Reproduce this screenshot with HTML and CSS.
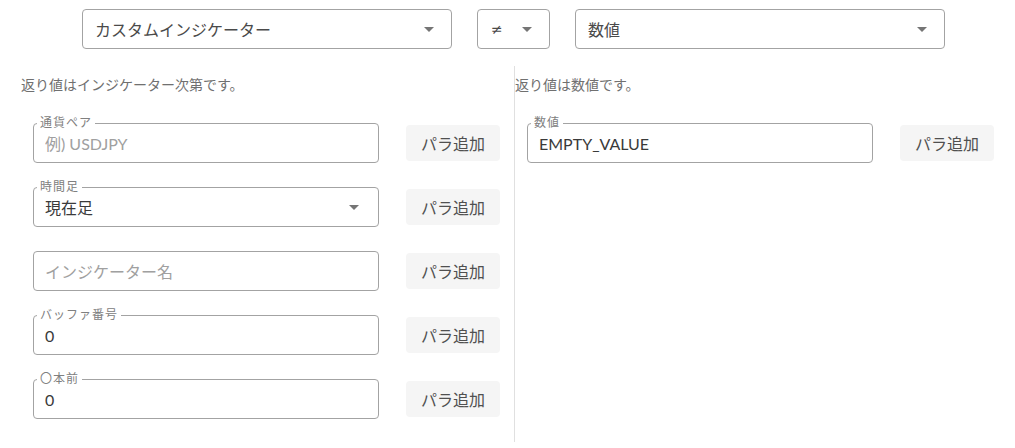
FILE: index.html
```html
<!DOCTYPE html>
<html lang="ja">
<head>
    <meta charset="UTF-8">
    <meta name="viewport" content="width=device-width, initial-scale=1.0">
    <title>条件設定</title>
    <link rel="stylesheet" href="styles.css">
</head>
<body>
    <!-- 比較条件: 左辺 / 演算子 / 右辺 -->
    <div class="condition-bar">
        <div class="select select-wide">
            <span>カスタムインジケーター</span>
            <span class="caret"></span>
        </div>
        <div class="select select-op">
            <span class="op-symbol">≠</span>
            <span class="caret"></span>
        </div>
        <div class="select select-wide">
            <span>数値</span>
            <span class="caret"></span>
        </div>
    </div>

    <div class="panels">
        <!-- 左辺のパラメータ -->
        <section class="panel panel-left">
            <p class="panel-note">返り値はインジケーター次第です。</p>

            <div class="param-row">
                <div class="field">
                    <span class="field-label">通貨ペア</span>
                    <input type="text" placeholder="例) USDJPY">
                </div>
                <button class="add-btn">パラ追加</button>
            </div>

            <div class="param-row">
                <div class="field has-caret">
                    <span class="field-label">時間足</span>
                    <input type="text" value="現在足" readonly>
                    <span class="caret"></span>
                </div>
                <button class="add-btn">パラ追加</button>
            </div>

            <div class="param-row">
                <div class="field">
                    <input type="text" placeholder="インジケーター名">
                </div>
                <button class="add-btn">パラ追加</button>
            </div>

            <div class="param-row">
                <div class="field">
                    <span class="field-label">バッファ番号</span>
                    <input type="text" value="0">
                </div>
                <button class="add-btn">パラ追加</button>
            </div>

            <div class="param-row">
                <div class="field">
                    <span class="field-label">〇本前</span>
                    <input type="text" value="0">
                </div>
                <button class="add-btn">パラ追加</button>
            </div>
        </section>

        <!-- 右辺のパラメータ -->
        <section class="panel panel-right">
            <p class="panel-note">返り値は数値です。</p>

            <div class="param-row">
                <div class="field">
                    <span class="field-label">数値</span>
                    <input type="text" value="EMPTY_VALUE">
                </div>
                <button class="add-btn">パラ追加</button>
            </div>
        </section>
    </div>
</body>
</html>
```

FILE: styles.css
```css
/* 基本スタイル */
* {
    margin: 0;
    padding: 0;
    box-sizing: border-box;
}

body {
    font-family: Lato, "Noto Sans CJK JP", sans-serif;
    background: #fff;
    color: rgba(0, 0, 0, 0.87);
}

/* 上部のセレクト群 */
.condition-bar {
    display: flex;
    justify-content: center;
    gap: 25px;
    padding-top: 9px;
    padding-left: 12px;
}

.select {
    height: 40px;
    display: flex;
    align-items: center;
    justify-content: space-between;
    padding: 0 17px 0 12px;
    border: 1px solid #a3a3a3;
    border-radius: 4px;
    font-size: 16px;
    color: #4a4a4a;
}

.select-wide {
    width: 370px;
}

.select-op {
    width: 73px;
}

.op-symbol {
    font-family: "DejaVu Sans", sans-serif;
    font-size: 14px;
    padding-left: 1px;
}

/* ドロップダウンの三角 */
.caret {
    width: 0;
    height: 0;
    border-left: 5px solid transparent;
    border-right: 5px solid transparent;
    border-top: 5px solid #757575;
    flex-shrink: 0;
}

/* 左右のパネル */
.panels {
    display: flex;
    margin-top: 17px;
}

.panel {
    padding-top: 9px;
    padding-bottom: 23px;
}

.panel-left {
    width: 515px;
    padding-left: 21px;
    border-right: 1px solid #e0e0e0;
}

.panel-right {
    flex: 1;
}

.panel-note {
    font-size: 14px;
    line-height: 20px;
    color: #707070;
    margin-bottom: 28px;
}

/* パラメータ行 */
.param-row {
    display: flex;
    align-items: center;
    gap: 27px;
    margin-left: 12px;
    margin-bottom: 24px;
}

.param-row:last-child {
    margin-bottom: 0;
}

/* アウトライン入力欄 */
.field {
    position: relative;
    width: 346px;
    height: 40px;
    display: flex;
    align-items: center;
    padding: 0 11px;
    border: 1px solid #a3a3a3;
    border-radius: 4px;
}

.field.has-caret {
    padding-right: 19px;
}

.field-label {
    position: absolute;
    top: -8px;
    left: 3px;
    padding: 0 3px;
    background: #fff;
    font-size: 12px;
    letter-spacing: 1px;
    line-height: 14px;
    color: #808080;
}

.field input {
    flex: 1;
    min-width: 0;
    border: none;
    outline: none;
    background: transparent;
    font-family: inherit;
    font-size: 16px;
    color: #3a3a3a;
}

.field input::placeholder {
    color: #a0a0a0;
}

/* パラ追加ボタン */
.add-btn {
    width: 94px;
    height: 36px;
    border: none;
    border-radius: 4px;
    background: #f5f5f5;
    font-family: inherit;
    font-size: 16px;
    color: #505050;
}
```
